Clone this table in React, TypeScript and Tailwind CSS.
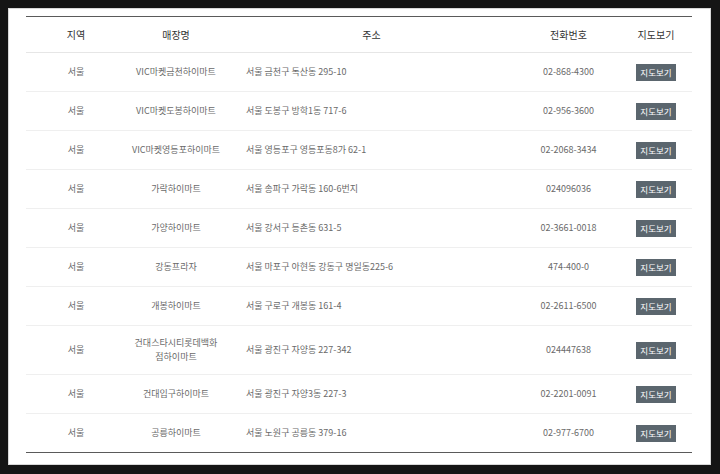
const stores = [
  { region: "서울", name: "VIC마켓금천하이마트", addr: "서울 금천구 독산동 295-10", tel: "02-868-4300" },
  { region: "서울", name: "VIC마켓도봉하이마트", addr: "서울 도봉구 방학1동 717-6", tel: "02-956-3600" },
  { region: "서울", name: "VIC마켓영등포하이마트", addr: "서울 영등포구 영등포동8가 62-1", tel: "02-2068-3434" },
  { region: "서울", name: "가락하이마트", addr: "서울 송파구 가락동 160-6번지", tel: "024096036" },
  { region: "서울", name: "가양하이마트", addr: "서울 강서구 등촌동 631-5", tel: "02-3661-0018" },
  { region: "서울", name: "강동프라자", addr: "서울 마포구 아현동 강동구 명일동225-6", tel: "474-400-0" },
  { region: "서울", name: "개봉하이마트", addr: "서울 구로구 개봉동 161-4", tel: "02-2611-6500" },
  { region: "서울", name: "건대스타시티롯데백화점하이마트", addr: "서울 광진구 자양동 227-342", tel: "024447638" },
  { region: "서울", name: "건대입구하이마트", addr: "서울 광진구 자양3동 227-3", tel: "02-2201-0091" },
  { region: "서울", name: "공릉하이마트", addr: "서울 노원구 공릉동 379-16", tel: "02-977-6700" },
]

export default function App() {
  return (
    <div className="h-[474px] w-[720px] bg-[#151515] pb-[9px] pl-[8px] pr-[9px] pt-[8px] font-['Noto_Sans_CJK_KR','Noto_Sans',sans-serif]">
      <div className="h-full w-full bg-white px-[18px] pt-[8px] shadow-[inset_0_0_0_1px_#d8d8d8]">
        <table className="w-[666px] table-fixed border-collapse border-y border-[#5a5a5a]">
          <colgroup>
            <col className="w-[100px]" />
            <col className="w-[100px]" />
            <col className="w-[291px]" />
            <col className="w-[103px]" />
            <col className="w-[72px]" />
          </colgroup>
          <thead>
            <tr className="h-[36px] border-b border-[#e6e6e6] text-[10px] text-[#333]">
              <th className="font-normal">지역</th>
              <th className="font-normal">매장명</th>
              <th className="font-normal">주소</th>
              <th className="font-normal">전화번호</th>
              <th className="font-normal">지도보기</th>
            </tr>
          </thead>
          <tbody className="text-[9px] text-[#6a6a6a]">
            {stores.map((s, i) => (
              <tr key={i} className="h-[39px] border-b border-[#efefef] last:border-b-0">
                <td className="text-center">{s.region}</td>
                <td className="break-all px-[5px] py-[10px] text-center leading-[14px]">{s.name}</td>
                <td className="pl-[20px]">{s.addr}</td>
                <td className="text-center">{s.tel}</td>
                <td className="text-center">
                  <span className="inline-flex h-[17px] w-[40px] items-center justify-center bg-[#5b666e] text-[8.5px] text-white">
                    지도보기
                  </span>
                </td>
              </tr>
            ))}
          </tbody>
        </table>
      </div>
    </div>
  )
}
